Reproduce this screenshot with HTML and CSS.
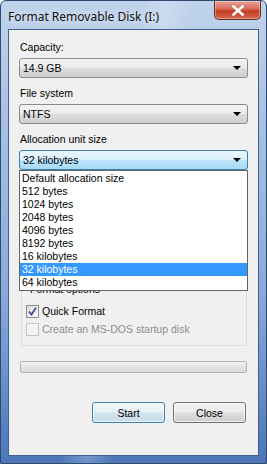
FILE: index.html
```html
<!DOCTYPE html>
<html lang="en">
<head>
    <meta charset="UTF-8">
    <meta name="viewport" content="width=device-width, initial-scale=1.0">
    <title>Format Removable Disk (I:)</title>
    <link rel="stylesheet" href="styles.css">
</head>
<body>
    <div class="window">
        <div class="titlebar">
            <span class="title">Format Removable Disk (I:)</span>
            <button class="close-btn">
                <svg width="14" height="11" viewBox="0 0 14 11">
                    <path d="M2.5 1.5 L11.5 9.5 M11.5 1.5 L2.5 9.5" stroke="#fff" stroke-width="2.6" stroke-linecap="square"/>
                </svg>
            </button>
        </div>

        <div class="client">
            <div class="label first">Capacity:</div>
            <div class="combo"><span>14.9 GB</span><i class="arrow"></i></div>

            <div class="label">File system</div>
            <div class="combo"><span>NTFS</span><i class="arrow"></i></div>

            <div class="label">Allocation unit size</div>
            <div class="combo-wrap">
                <div class="combo open"><span>32 kilobytes</span><i class="arrow"></i></div>
                <ul class="droplist">
                    <li>Default allocation size</li>
                    <li>512 bytes</li>
                    <li>1024 bytes</li>
                    <li>2048 bytes</li>
                    <li>4096 bytes</li>
                    <li>8192 bytes</li>
                    <li>16 kilobytes</li>
                    <li class="selected">32 kilobytes</li>
                    <li>64 kilobytes</li>
                </ul>
            </div>

            <fieldset class="group">
                <legend>Format options</legend>
                <label class="check">
                    <span class="box">
                        <svg width="9" height="9" viewBox="0 0 9 9">
                            <path d="M1 4.5 L3.5 7.5 L8 0.8" stroke="#3c4f8c" stroke-width="1.8" fill="none"/>
                        </svg>
                    </span>
                    Quick Format
                </label>
                <label class="check disabled">
                    <span class="box"></span>
                    Create an MS-DOS startup disk
                </label>
            </fieldset>

            <div class="progress"></div>

            <div class="buttons">
                <button class="btn default">Start</button>
                <button class="btn">Close</button>
            </div>
        </div>
    </div>
</body>
</html>
```

FILE: styles.css
```css
body {
    margin: 0;
    font-family: "Liberation Sans", Arial, sans-serif;
    font-size: 10.5px;
    color: #000;
}
.window {
    width: 267px;
    height: 464px;
    box-sizing: border-box;
    border: 1px solid #2f4a70;
    border-radius: 6px 6px 0 0;
    background:
        linear-gradient(100deg, rgba(255,255,255,0) 40%, rgba(255,255,255,0.22) 48%, rgba(255,255,255,0) 56%),
        linear-gradient(to bottom, #bfd3ec 0%, #a9c2e3 25%, #87a8d8 65%, #4c76b8 100%);
    display: flex;
    flex-direction: column;
    padding: 0 7px 7px 7px;
}
.titlebar {
    height: 28px;
    display: flex;
    align-items: flex-start;
    justify-content: space-between;
}
.title {
    margin-top: 7px;
    font-family: "Noto Sans", "Open Sans", sans-serif;
    font-size: 12px;
    color: #111;
    text-shadow: 0 0 6px rgba(255,255,255,0.9);
}
.close-btn {
    width: 47px;
    height: 19px;
    margin-right: -2px;
    border: 1px solid #6d2a1e;
    border-top: none;
    border-radius: 0 0 5px 5px;
    background: linear-gradient(to bottom, #e9a597 0%, #d66a57 45%, #c43a22 55%, #d46a50 100%);
    box-shadow: inset 0 0 0 1px rgba(255,255,255,0.35);
    display: flex;
    align-items: center;
    justify-content: center;
    padding: 0;
}
.client {
    flex: 1;
    background: #f0f0f0;
    border: 1px solid #3f5f8f;
    padding: 0 10px;
    overflow: hidden;
}
.label {
    height: 15px;
    line-height: 15px;
    margin: 8px 0 3px 1px;
}
.label.first {
    margin-top: 10px;
}
.combo {
    height: 20px;
    box-sizing: border-box;
    border: 1px solid #8a8a8a;
    border-radius: 3px;
    background: linear-gradient(to bottom, #f4f4f4 0%, #ebebeb 48%, #dddddd 52%, #d0d0d0 100%);
    display: flex;
    align-items: center;
    justify-content: space-between;
    padding: 0 6px 0 3px;
}
.combo.open {
    border-color: #3c7fb1;
    background: linear-gradient(to bottom, #eaf6fd 0%, #d9f0fc 48%, #bee6fd 52%, #a7d9f5 100%);
}
.arrow {
    width: 0;
    height: 0;
    border-left: 4px solid transparent;
    border-right: 4px solid transparent;
    border-top: 4px solid #000;
}
.combo-wrap {
    position: relative;
}
.droplist {
    position: absolute;
    top: 20px;
    left: 0;
    right: 0;
    margin: 0;
    padding: 1px 0;
    list-style: none;
    background: #fff;
    border: 1px solid #646464;
    z-index: 2;
}
.droplist li {
    height: 13px;
    line-height: 13px;
    padding-left: 2px;
}
.droplist li.selected {
    background: #3399ff;
    color: #fff;
}
/* the list hides the restore button and volume label that sit here */
.group {
    margin: 112px 1px 0 2px;
    padding: 5px 0 7px 4px;
    border: 1px solid #d5dfe5;
    border-radius: 3px;
}
.group legend {
    height: 15px;
    line-height: 15px;
    padding: 0 2px;
    margin-left: 2px;
}
.check {
    display: flex;
    align-items: center;
    gap: 3px;
    height: 18px;
}
.check.disabled {
    color: #8d8d8d;
}
.box {
    width: 13px;
    height: 13px;
    box-sizing: border-box;
    border: 1px solid #8e8f8f;
    background: linear-gradient(135deg, #dcdcdc 0%, #fbfbfb 100%);
    display: flex;
    align-items: center;
    justify-content: center;
}
.check.disabled .box {
    border-color: #c5c5c5;
    background: #f4f4f4;
}
.progress {
    height: 12px;
    margin: 15px 1px 0 1px;
    box-sizing: border-box;
    border: 1px solid #b2b2b2;
    border-radius: 2px;
    background: linear-gradient(to bottom, #f3f3f3 0%, #e4e4e4 50%, #dadada 100%);
}
.buttons {
    display: flex;
    justify-content: flex-end;
    gap: 8px;
    margin-top: 29px;
    padding-right: 2px;
}
.btn {
    width: 73px;
    height: 21px;
    font-family: inherit;
    font-size: 10.5px;
    border: 1px solid #707070;
    border-radius: 3px;
    background: linear-gradient(to bottom, #f2f2f2 0%, #ebebeb 48%, #dddddd 52%, #cfcfcf 100%);
    box-shadow: inset 0 0 0 1px rgba(255,255,255,0.7);
    padding: 0;
}
.btn.default {
    border-color: #3c7fb1;
    background: linear-gradient(to bottom, #f2f8fc 0%, #e6f0f6 48%, #d4e4ef 52%, #c6dbe9 100%);
}
```
